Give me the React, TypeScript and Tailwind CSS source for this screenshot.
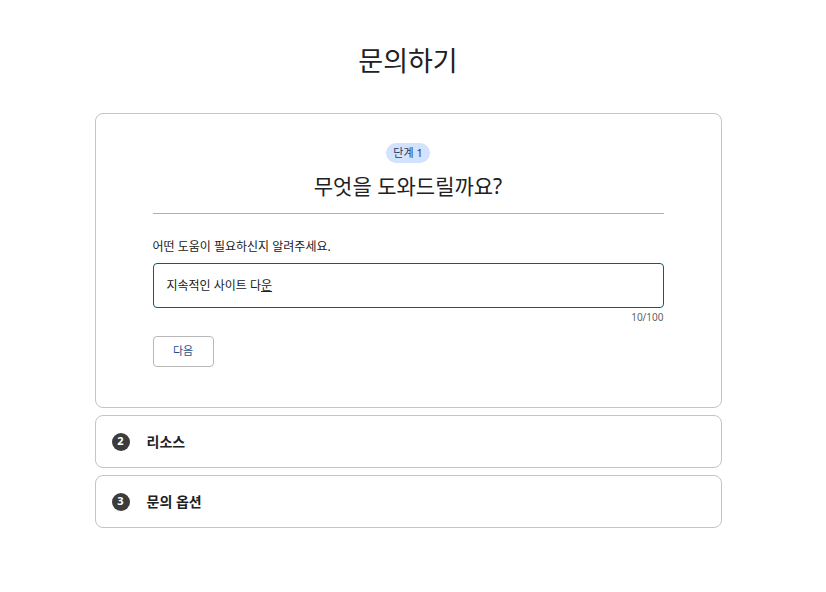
const font = { fontFamily: '"Noto Sans", "Noto Sans CJK KR", sans-serif' };

function StepCard({ n, title }: { n: number; title: string }) {
  return (
    <div className="flex h-[53px] items-center gap-[17px] rounded-lg border border-[#c4c4c4] px-[16px]">
      <span className="flex h-[18px] w-[18px] items-center justify-center rounded-full bg-[#3c3c3c] text-[11px] font-bold text-white">
        {n}
      </span>
      <span className="text-[14px] font-bold text-[#202124]">{title}</span>
    </div>
  );
}

export default function App() {
  return (
    <div className="min-h-[592px] w-[816px] bg-white text-[#202124]" style={font}>
      <h1 className="pt-[42px] pb-[33px] text-center text-[27px] leading-[38px] text-[#202124]">문의하기</h1>
      <div className="mx-auto flex w-[627px] flex-col gap-[7px]">
        <div className="rounded-lg border border-[#c4c4c4] px-[57px] pt-[29px] pb-[40px]">
          <div className="flex flex-col items-center">
            <span className="rounded-full bg-[#d3e3fd] px-[7px] text-[11px] leading-[20px] text-[#1f3a5f]">단계 1</span>
            <h2 className="mt-[9px] text-[21px] leading-[28px] text-[#202124]">무엇을 도와드릴까요?</h2>
          </div>
          <div className="mt-[13px] h-px bg-[#b0b0b0]" />
          <p className="mt-[25px] text-[12px] leading-[16px] text-[#202124]">어떤 도움이 필요하신지 알려주세요.</p>
          <div className="mt-[8px] flex h-[45px] items-center rounded-[4px] border border-[#0b5a7a] px-[13px] text-[12px]">
            <span>
              지속적인 사이트 다<span className="underline">운</span>
            </span>
          </div>
          <p className="mt-[2px] text-right text-[10px] leading-[14px] text-[#5f6368]">10/100</p>
          <button className="mt-[12px] h-[31px] w-[61px] rounded-[4px] border border-[#b8b8b8] bg-white text-[11px] text-[#1f4f8a]">
            다음
          </button>
        </div>
        <StepCard n={2} title="리소스" />
        <StepCard n={3} title="문의 옵션" />
      </div>
    </div>
  );
}
